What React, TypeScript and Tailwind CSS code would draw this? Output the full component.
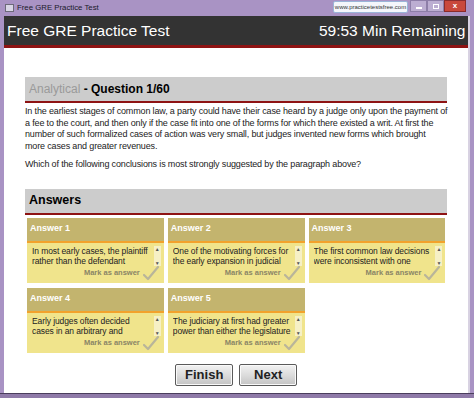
import React from 'react';

const answers = [
  { label: 'Answer 1', lines: ['In most early cases, the plaintiff', 'rather than the defendant'] },
  { label: 'Answer 2', lines: ['One of the motivating forces for', 'the early expansion in judicial'] },
  { label: 'Answer 3', lines: ['The first common law decisions', 'were inconsistent with one'] },
  { label: 'Answer 4', lines: ['Early judges often decided', 'cases in an arbitrary and'] },
  { label: 'Answer 5', lines: ['The judiciary at first had greater', 'power than either the legislature'] },
];

const paragraph = [
  'In the earliest stages of common law, a party could have their case heard by a judge only upon the payment of',
  'a fee to the court, and then only if the case fit into one of the forms for which there existed a writ. At first the',
  'number of such formalized cases of action was very small, but judges invented new forms which brought',
  'more cases and greater revenues.',
];

const Check = () => (
  <svg width="16" height="15" viewBox="0 0 16 15">
    <path d="M1 9 L5 13 L15 1" fill="none" stroke="#b9b59a" strokeWidth="2.2" strokeLinecap="round" strokeLinejoin="round" />
  </svg>
);

const AnswerCard = ({ label, lines }: { label: string; lines: string[] }) => (
  <div className="flex flex-col">
    <div className="h-[23px] bg-[#c3b46e] flex items-center px-[3px] text-[9px] font-bold text-white">{label}</div>
    <div className="h-[2px] bg-[#f2a22c]" />
    <div className="h-[40px] bg-[#f0e48c] flex flex-col">
      <div className="flex pl-[5px] pr-[3px] pt-[3px]">
        <div className="flex-1 text-[8.5px] tracking-[-0.1px] leading-[10px] text-[#222] h-[20px] overflow-hidden">
          {lines.map((l) => (
            <div key={l} className="whitespace-nowrap">{l}</div>
          ))}
        </div>
        <div className="w-[7px] h-[20px] bg-[#f6f0c6] flex flex-col items-center justify-between text-[5px] leading-[6px] text-[#555]">
          <span>▲</span>
          <span>▼</span>
        </div>
      </div>
      <div className="flex justify-end items-center pr-[5px] gap-[3px]">
        <span className="text-[7.5px] font-bold text-[#8a8466]">Mark as answer</span>
        <Check />
      </div>
    </div>
  </div>
);

export default function App() {
  return (
    <div
      className="w-[474px] h-[398px] bg-[#a993c4] flex flex-col overflow-hidden"
      style={{ fontFamily: '"Liberation Sans", Arial, sans-serif' }}
    >
      {/* window title bar */}
      <div className="h-[16px] flex items-center relative">
        <div className="ml-[5px] w-[9px] h-[8px] border border-[#6d6a7a] bg-[#d9d6e6]" />
        <span className="ml-[3px] text-[7.8px] text-[#1a1a2a]">Free GRE Practice Test</span>
        <div className="absolute left-[333px] top-[1px] w-[75px] h-[12px] bg-[#f4f6fb] border border-[#9ab4d8] rounded-[2px] flex items-center justify-center text-[6px] text-[#333] whitespace-nowrap">
          www.practicetestsfree.com
        </div>
        <div className="absolute left-[410px] top-0 flex">
          <div className="w-[17px] h-[12px] bg-[#bcaed2] border border-[#8d7ea8] flex items-end justify-center pb-[2px]">
            <div className="w-[6px] h-[2px] bg-white" />
          </div>
          <div className="w-[17px] h-[12px] bg-[#bcaed2] border border-[#8d7ea8] flex items-center justify-center">
            <div className="w-[6px] h-[5px] border border-white" />
          </div>
          <div className="w-[22px] h-[12px] bg-[#c9483c] border border-[#8a2b2b] flex items-center justify-center text-[8px] font-bold text-white leading-none">
            x
          </div>
        </div>
      </div>

      <div className="flex-1 flex mx-[4px]">
        <div className="flex-1 flex flex-col bg-white">
          {/* dark header */}
          <div className="h-[29px] bg-[#333333] flex items-center justify-between px-[3px] text-white text-[15.5px]">
            <span>Free GRE Practice Test</span>
            <span>59:53 Min Remaining</span>
          </div>
          <div className="h-[3px] bg-[#8e1313]" />

          <div className="flex-1 flex flex-col pl-[21px] pr-[21px] pt-[29px]">
            {/* question */}
            <div className="h-[24px] bg-[#cccccc] flex items-center px-[4px] text-[12px]">
              <span className="text-[#9a9a9a]">Analytical</span>
              <span className="font-bold text-black">&nbsp;- Question 1/60</span>
            </div>
            <div className="h-[2px] bg-[#8e1313]" />
            <div className="mt-[3px] text-[9px] tracking-[-0.15px] leading-[11.5px] text-[#222]">
              {paragraph.map((l) => (
                <div key={l} className="whitespace-nowrap">{l}</div>
              ))}
            </div>
            <p className="mt-[7px] text-[9px] tracking-[-0.15px] leading-[11.5px] text-[#222]">
              Which of the following conclusions is most strongly suggested by the paragraph above?
            </p>

            {/* answers */}
            <div className="mt-[18px] h-[24px] bg-[#cccccc] flex items-center px-[4px] text-[12.5px] font-bold text-black">
              Answers
            </div>
            <div className="h-[2px] bg-[#8e1313]" />
            <div className="mt-[3px] px-[2px] grid grid-cols-3 gap-x-[4px] gap-y-[5px]">
              {answers.map((a) => (
                <AnswerCard key={a.label} label={a.label} lines={a.lines} />
              ))}
            </div>

            {/* buttons */}
            <div className="mt-[11px] flex justify-center gap-[6px]">
              {['Finish', 'Next'].map((b) => (
                <button
                  key={b}
                  className="w-[58px] h-[22px] border border-[#5a5a5a] rounded-[2px] bg-gradient-to-b from-[#f2f2f2] via-[#dcdcdc] to-[#c4c4c4] text-[13px] font-bold text-[#222] shadow-[inset_0_0_0_1px_#fafafa]"
                >
                  {b}
                </button>
              ))}
            </div>
          </div>
        </div>
        <div className="w-[2px] bg-[#d8d2e2]" />
      </div>
      <div className="h-[5px] border-t border-[#4a3d5c] bg-[#8f7aa8]" />
    </div>
  );
}
